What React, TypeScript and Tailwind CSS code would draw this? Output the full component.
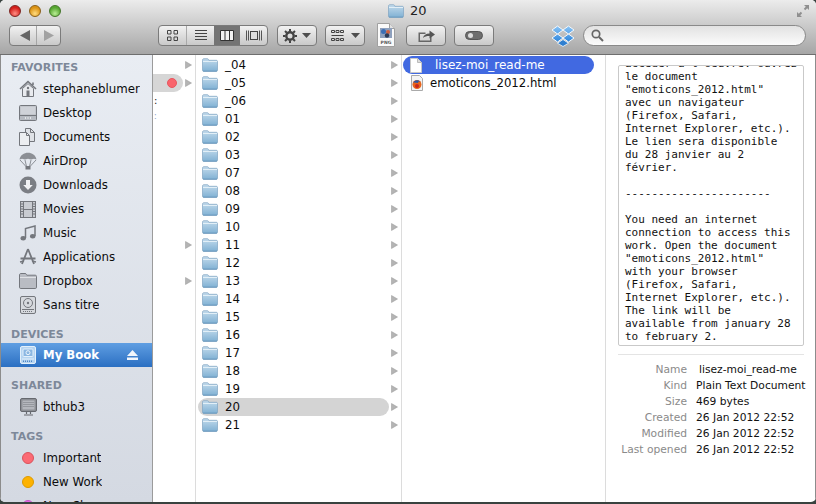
import React from "react";

const ui = { fontFamily: '"DejaVu Sans", Verdana, sans-serif' };

function Folder({ className = "" }: { className?: string }) {
  return (
    <svg width="16" height="14" viewBox="0 0 16 14" className={className}>
      <defs>
        <linearGradient id="fg" x1="0" y1="0" x2="0" y2="1">
          <stop offset="0" stopColor="#c3dbec" />
          <stop offset="1" stopColor="#7fb0d3" />
        </linearGradient>
      </defs>
      <path d="M.5 2.200C.5 1.200 1 .7 2 .7h3.300c.7 0 1 .3 1.300 1l.3.6h7.200c1 0 1.400.5 1.400 1.400v8.400c0 .9-.5 1.400-1.400 1.400H1.900c-.9 0-1.400-.5-1.400-1.400z" fill="url(#fg)" stroke="#7fa4c1" strokeWidth=".7" />
      <path d="M1 3.500h14" stroke="#e2eff7" strokeWidth="1" />
      <path d="M1 13h14" stroke="#6a9bbf" strokeWidth=".8" />
    </svg>
  );
}

function Arrow({ className = "" }: { className?: string }) {
  return (
    <svg width="7" height="8" viewBox="0 0 7 8" className={className}>
      <path d="M.5.5 6.500 4 .5 7.500z" fill="#b4b4b4" stroke="#979797" strokeWidth=".5" />
    </svg>
  );
}

const C = "#74777d";

const icons: Record<string, React.ReactNode> = {
  home: (
    <svg width="18" height="18" viewBox="0 0 18 18">
      <path d="M1 9 9 1.500 17 9M14 5V2.500" fill="none" stroke={C} strokeWidth="1.600" />
      <path d="M3.500 8.500 9 3.600l5.500 4.900V16.500h-11z" fill="#e9ebef" stroke={C} />
      <path d="M7.500 10.500h3V16.500h-3z" fill={C} />
      <circle cx="9" cy="8" r="1.200" fill={C} />
    </svg>
  ),
  desktop: (
    <svg width="18" height="16" viewBox="0 0 18 16">
      <rect x=".5" y=".5" width="17" height="15" rx="1" fill="#b6bac1" stroke={C} />
      <rect x="1.500" y="1.500" width="15" height="8" fill="#cfd2d8" />
      <path d="M1 10.500h16" stroke={C} />
      <path d="M6 13h1M8.500 13h1M11 13h1" stroke="#f2f3f5" strokeWidth="1.400" />
    </svg>
  ),
  docs: (
    <svg width="18" height="18" viewBox="0 0 18 18">
      <path d="M6.500.5h5l4 4V13.500h-9z" fill="#dfe2e7" stroke={C} />
      <path d="M.5 4.500h7l3 3v10h-10z" fill="#eceef1" stroke={C} />
      <path d="M7.500 4.500v3h3M11.500.5v4h4" fill="none" stroke={C} />
    </svg>
  ),
  airdrop: (
    <svg width="18" height="18" viewBox="0 0 18 18">
      <path d="M.5 7.500C1.500 3 5 .8 9 .8s7.500 2.200 8.500 6.700L15 6.700l-3 .9L9 6.700l-3 .9-3-.9z" fill="#8c8f95" />
      <path d="M1 8l6 6.500M17 8l-6 6.500M6 8l1.500 6.500M12 8l-1.500 6.500" stroke={C} strokeWidth=".8" />
      <rect x="6.500" y="14" width="5" height="3.500" fill={C} />
    </svg>
  ),
  downloads: (
    <svg width="18" height="18" viewBox="0 0 18 18">
      <circle cx="9" cy="9" r="8.500" fill="#7b7e84" />
      <path d="M7 4h4v5h2.800L9 14 4.200 9H7z" fill="#f1f2f4" />
    </svg>
  ),
  movies: (
    <svg width="16" height="17" viewBox="0 0 16 17">
      <rect x=".5" y=".5" width="15" height="16" fill="#c9ccd2" stroke={C} />
      <path d="M3.500 .5v16M12.500 .5v16M3.500 8.500h9" stroke={C} />
      <path d="M1 3h2M1 5.500h2M1 8h2M1 10.500h2M1 13h2M13 3h2M13 5.500h2M13 8h2M13 10.500h2M13 13h2" stroke={C} strokeWidth="1" />
    </svg>
  ),
  music: (
    <svg width="16" height="16" viewBox="0 0 16 16">
      <path d="M5.500 13V3.500L15 1v10" fill="none" stroke={C} strokeWidth="1.500" />
      <ellipse cx="3.200" cy="13.300" rx="2.700" ry="2.200" fill={C} />
      <ellipse cx="12.700" cy="11.300" rx="2.700" ry="2.200" fill={C} />
    </svg>
  ),
  apps: (
    <svg width="18" height="18" viewBox="0 0 18 18">
      <path d="M9 1 3 16M9 1l6 15M1.500 10.500h15" fill="none" stroke={C} strokeWidth="1.800" />
      <path d="M1 14l4-1M17 14l-4-1" stroke={C} strokeWidth="1.400" />
    </svg>
  ),
  folder: (
    <svg width="18" height="16" viewBox="0 0 18 16">
      <path d="M.5 2C.5 1 1 .5 2 .5h4c.8 0 1.200.3 1.500 1l.3.7h8.500c.8 0 1.200.5 1.200 1.300v10.700c0 .8-.4 1.300-1.200 1.300H1.700C.9 15.500.5 15 .5 14.200z" fill="#b9bcc3" stroke={C} />
      <path d="M1 4.500h16" stroke="#e0e2e6" />
    </svg>
  ),
  disk: (
    <svg width="16" height="18" viewBox="0 0 16 18">
      <rect x=".5" y=".5" width="15" height="17" rx="1.500" fill="#d6d9de" stroke={C} />
      <circle cx="8" cy="7" r="4.500" fill="none" stroke={C} />
      <circle cx="8" cy="7" r="1.200" fill={C} />
      <path d="M2 13.500h12" stroke={C} />
      <path d="M3 15.500h10" stroke={C} strokeDasharray="1 1" />
    </svg>
  ),
  book: (
    <svg width="16" height="18" viewBox="0 0 16 18">
      <rect x=".5" y=".5" width="15" height="17" rx="1.500" fill="#b5d4f1" stroke="#e3f0fb" />
      <rect x="3" y="3" width="10" height="7.500" rx="1" fill="#8bb7e2" stroke="#e3f0fb" />
      <circle cx="8" cy="6.700" r="2" fill="none" stroke="#eaf3fb" />
      <path d="M2 13h12" stroke="#e3f0fb" />
      <path d="M3 15.300h10" stroke="#4f86c4" strokeDasharray="1 1" strokeWidth="1.400" />
    </svg>
  ),
  monitor: (
    <svg width="17" height="18" viewBox="0 0 17 18">
      <rect x=".5" y=".5" width="16" height="13" rx="1.500" fill="#8c8f95" stroke="#66696f" />
      <rect x="2.500" y="2.500" width="12" height="9" fill="#b4b7bd" />
      <path d="M3 4.500h11M3 6.500h11M3 8.500h11" stroke="#94979d" />
      <path d="M6.500 14v2M10.500 14v2M4 17h9" stroke="#66696f" strokeWidth="1.200" />
    </svg>
  ),
};

function Dot({ color, border }: { color: string; border: string }) {
  return <span className="block w-[12px] h-[12px] rounded-full border" style={{ background: color, borderColor: border }} />;
}

function SidebarHead({ children, className = "" }: { children: string; className?: string }) {
  return <div className={`h-[14px] leading-[14px] pl-[10px] text-[11px] font-bold text-[#7d8899] ${className}`}>{children}</div>;
}

function IconSlot({ children }: { children: React.ReactNode }) {
  return (
    <span className="w-[42px] pl-[15px] flex shrink-0">
      <span className="w-[24px] flex justify-center">{children}</span>
    </span>
  );
}

function SidebarRow({ icon, label }: { icon: React.ReactNode; label: string }) {
  return (
    <div className="h-[24px] flex items-center text-[11.800px] text-[#0c0c0c] shrink-0">
      <IconSlot>{icon}</IconSlot>
      <span className="truncate pt-[1px]">{label}</span>
    </div>
  );
}

function Tool({ className = "", children }: { className?: string; children?: React.ReactNode }) {
  return (
    <div className={`h-[21px] rounded-[4px] border border-[#7b7b7b] bg-gradient-to-b from-[#f2f2f2] to-[#c9c9c9] flex items-center justify-center shrink-0 ${className}`}>
      {children}
    </div>
  );
}

const Caret = () => (
  <svg width="9" height="5" viewBox="0 0 9 5"><path d="M0 0h9L4.500 5z" fill="#4e4e4e" /></svg>
);

const GridSmall = () => (
  <svg width="13" height="11" viewBox="0 0 13 11" fill="none" stroke="#444">
    <path d="M.5.500h3v2h-3zM5 .5h3v2H5zM9.500 .5h3v2h-3z" />
    <path d="M.5 5.500h12" />
    <path d="M.5 8.500h3v2h-3zM5 8.500h3v2H5zM9.500 8.500h3v2h-3z" />
  </svg>
);

const cols = ["_04", "_05", "_06", "01", "02", "03", "07", "08", "09", "10", "11", "12", "13", "14", "15", "16", "17", "18", "19", "20", "21"];

const preview = [
  "accéder à l'oeuvre. ouvrez",
  "le document",
  "\"emoticons_2012.html\"",
  "avec un navigateur",
  "(Firefox, Safari,",
  "Internet Explorer, etc.).",
  "Le lien sera disponible",
  "du 28 janvier au 2",
  "février.",
  "\u00a0",
  "----------------------",
  "\u00a0",
  "You need an internet",
  "connection to access this",
  "work. Open the document",
  "\"emoticons_2012.html\"",
  "with your browser",
  "(Firefox, Safari,",
  "Internet Explorer, etc.).",
  "The link will be",
  "available from january 28",
  "to february 2.",
];

const meta: [string, string, string?][] = [
  ["Name", "lisez-moi_read-me", "pl-[3px]"],
  ["Kind", "Plain Text Document"],
  ["Size", "469 bytes"],
  ["Created", "26 Jan 2012 22:52"],
  ["Modified", "26 Jan 2012 22:52"],
  ["Last opened", "26 Jan 2012 22:52"],
];

export default function App() {
  return (
    <div className="w-[816px] h-[504px] bg-[#39423f] overflow-hidden" style={ui}>
      <div className="w-[816px] h-[502px] rounded-[5px] overflow-hidden flex flex-col bg-white">
        {/* Toolbar */}
        <div className="h-[55px] shrink-0 bg-gradient-to-b from-[#ececec] to-[#a6a6a6] border-b border-[#6e6e6e] flex flex-col">
          <div className="h-[23px] shrink-0 flex items-center relative">
            <div className="flex gap-[8px] pl-[9px] -mt-[1px]">
              <Dot color="radial-gradient(circle at 50% 75%, #ff8f85, #d41f1b 65%)" border="#7e2421" />
              <Dot color="radial-gradient(circle at 50% 75%, #ffdc80, #dc9314 65%)" border="#8a5f18" />
              <Dot color="radial-gradient(circle at 50% 75%, #b9ee95, #56a631 65%)" border="#427528" />
            </div>
            <div className="absolute left-[388px] top-[4px] flex items-center gap-[6px]">
              <Folder />
              <span className="text-[13px] leading-[14px] text-[#222]">20</span>
            </div>
            <svg width="14" height="14" viewBox="0 0 14 14" className="absolute left-[796px] top-[4px]">
              <path d="M8 1h5v5l-1.800-1.800-2 2-1.400-1.400 2-2zM6 13H1V8l1.800 1.800 2-2 1.400 1.400-2 2z" fill="#8f8f8f" />
            </svg>
          </div>
          <div className="h-[31px] flex items-start pl-[9px] pt-[2px]">
            <Tool className="w-[52px] mr-[97px] relative">
              <svg width="12" height="11" viewBox="0 0 12 11" className="absolute left-[10px] top-[4px]"><path d="M0 5.500 10 0v11z" fill="#666" /></svg>
              <span className="absolute left-[26px] top-0 h-full w-px bg-[#a5a5a5]" />
              <svg width="10" height="11" viewBox="0 0 10 11" className="absolute left-[34px] top-[4px]"><path d="M10 5.500 0 0v11z" fill="#a2a2a2" /></svg>
            </Tool>
            <Tool className="w-[110px] mr-[9px] overflow-hidden !justify-start">
              <div className="w-[28px] h-full flex items-center justify-center border-r border-[#a9a9a9]">
                <svg width="11" height="11" viewBox="0 0 11 11"><path d="M.5.500H4V4H.5zM7 .5h3.500V4H7zM.5 7H4v3.500H.5zM7 7h3.500v3.500H7z" fill="none" stroke="#444" /></svg>
              </div>
              <div className="w-[27px] h-full flex items-center justify-center">
                <svg width="12" height="11" viewBox="0 0 12 11"><path d="M0 .5h12M0 3.500h12M0 6.500h12M0 9.500h12" stroke="#444" /></svg>
              </div>
              <div className="w-[26px] h-full flex items-center justify-center bg-[#747474]">
                <svg width="14" height="11" viewBox="0 0 14 11"><path d="M.5.500h13v10H.5zM5 .5v10M9.500 .5v10" fill="#f2f2f2" stroke="#333" /></svg>
              </div>
              <div className="flex-1 h-full flex items-center justify-center">
                <svg width="16" height="11" viewBox="0 0 16 11"><path d="M.5.500v10M2.500 .5v10M13.500 .5v10M15.500 .5v10" stroke="#555" /><rect x="4.500" y="1.500" width="7" height="8" fill="#ddd" stroke="#444" /></svg>
              </div>
            </Tool>
            <Tool className="w-[40px] mr-[8px] gap-[5px]">
              <svg width="14" height="14" viewBox="0 0 14 14">
                <circle cx="7" cy="7" r="3.700" fill="none" stroke="#444" strokeWidth="2.400" />
                <path d="M7 0v2.500M7 11.500V14M0 7h2.500M11.500 7H14M2 2l1.800 1.800M10.200 10.200 12 12M12 2l-1.800 1.800M3.800 10.200 2 12" stroke="#444" strokeWidth="2" />
              </svg>
              <Caret />
            </Tool>
            <Tool className="w-[40px] mr-[11px] gap-[7px]"><GridSmall /><Caret /></Tool>
            <svg width="20" height="24" viewBox="0 0 20 24" className="shrink-0 -mt-[2px] mr-[10px]">
              <path d="M1.500 .5h12l5 5v18h-17z" fill="#fafafa" stroke="#a0a0a0" />
              <path d="M13.500 .5v5h5" fill="#e2e2e2" stroke="#a0a0a0" />
              <rect x="4" y="5" width="12" height="10" fill="#8ea0bd" />
              <circle cx="7.500" cy="8.500" r="2.500" fill="#3d6fb4" />
              <circle cx="12" cy="9" r="2" fill="#d0603f" />
              <circle cx="11" cy="12.500" r="2.200" fill="#2d3a55" />
              <text x="10" y="21" fontSize="4.500" fontWeight="700" textAnchor="middle" fill="#555">PNG</text>
            </svg>
            <Tool className="w-[40px] mr-[8px]">
              <svg width="17" height="13" viewBox="0 0 17 13">
                <path d="M.5 3.500h7V5H2v6.500h10V8h1.500v5H.5z" fill="#666" />
                <path d="M5 9c.5-3 3-4.500 6.500-4.500V1.500L17 5.500l-5.500 4V7C8.500 7 6.500 7.500 5 9z" fill="#555" />
              </svg>
            </Tool>
            <Tool className="w-[40px] mr-[57px]">
              <span className="w-[18px] h-[9px] rounded-full bg-[#6e6e6e] border border-[#555] flex items-center pl-[2px]">
                <span className="w-[5px] h-[5px] rounded-full bg-[#ddd]" />
              </span>
            </Tool>
            <svg width="24" height="22" viewBox="0 0 24 22" className="shrink-0 mr-[8px]">
              <defs>
                <linearGradient id="db" x1="0" y1="0" x2="0" y2="1">
                  <stop offset="0" stopColor="#8ac4f5" />
                  <stop offset="1" stopColor="#2f86dc" />
                </linearGradient>
              </defs>
              <path d="M6.500 1 12 5l-5.500 4L1 5zM17.500 1 23 5l-5.500 4L12 5zM6.500 9l5.500 4-5.500 4L1 13zM17.500 9l5.500 4-5.500 4-5.500-4z" fill="url(#db)" stroke="#f4f9fd" strokeWidth="1" strokeLinejoin="round" />
              <path d="M6.500 18.200 12 14.500l5.500 3.700L12 21.500z" fill="#2f7fd0" stroke="#f4f9fd" strokeWidth=".8" strokeLinejoin="round" />
            </svg>
            <div className="w-[223px] h-[21px] rounded-full border border-[#8a8a8a] bg-gradient-to-b from-[#e2e2e2] to-[#fbfbfb] flex items-center pl-[7px] shrink-0">
              <svg width="13" height="13" viewBox="0 0 13 13"><circle cx="5" cy="5" r="3.700" fill="none" stroke="#666" strokeWidth="1.700" /><path d="m8 8 4 4" stroke="#666" strokeWidth="2" /></svg>
            </div>
          </div>
        </div>

        {/* Body */}
        <div className="flex-1 flex min-h-0">
          {/* Sidebar */}
          <div className="w-[153px] shrink-0 bg-gradient-to-b from-[#e9edf3] to-[#d4d9e2] border-l border-[#8c8c8c] border-r border-r-[#9b9b9b] flex flex-col overflow-hidden pt-[6px]">
            <SidebarHead>FAVORITES</SidebarHead>
            <div className="h-[2px] shrink-0" />
            <SidebarRow icon={icons.home} label="stephaneblumer" />
            <SidebarRow icon={icons.desktop} label="Desktop" />
            <SidebarRow icon={icons.docs} label="Documents" />
            <SidebarRow icon={icons.airdrop} label="AirDrop" />
            <SidebarRow icon={icons.downloads} label="Downloads" />
            <SidebarRow icon={icons.movies} label="Movies" />
            <SidebarRow icon={icons.music} label="Music" />
            <SidebarRow icon={icons.apps} label="Applications" />
            <SidebarRow icon={icons.folder} label="Dropbox" />
            <SidebarRow icon={icons.disk} label="Sans titre" />
            <SidebarHead className="mt-[11px]">DEVICES</SidebarHead>
            <div className="h-[24px] mt-[1px] shrink-0 flex items-center bg-gradient-to-b from-[#5f9ee2] to-[#2a6fc2] text-white font-bold text-[11.700px] relative">
              <IconSlot>{icons.book}</IconSlot>
              <span className="pt-[1px]">My Book</span>
              <svg width="11" height="10" viewBox="0 0 11 10" className="absolute left-[126px] top-[7px]"><path d="M5.500 0 11 6H0zM0 7.500h11V10H0z" fill="#f1f6fc" /></svg>
            </div>
            <SidebarHead className="mt-[12px]">SHARED</SidebarHead>
            <div className="h-[2px] shrink-0" />
            <SidebarRow icon={icons.monitor} label="bthub3" />
            <SidebarHead className="mt-[11px]">TAGS</SidebarHead>
            <div className="h-[2px] shrink-0" />
            <SidebarRow icon={<span className="block w-[12px] h-[12px] rounded-full bg-[#fb6a74] border border-[#d9535c]" />} label="Important" />
            <SidebarRow icon={<span className="block w-[12px] h-[12px] rounded-full bg-[#fdb200] border border-[#dd9a00]" />} label="New Work" />
            <SidebarRow icon={<span className="block w-[12px] h-[12px] rounded-full bg-[#e96be8] border border-[#c655c6]" />} label="New Shop" />
          </div>

          {/* Column 1 */}
          <div className="w-[43px] shrink-0 border-r border-[#dcdcdc] pt-[1px] overflow-hidden">
            <div className="h-[18px] flex items-center justify-end pr-[3px]"><Arrow /></div>
            <div className="h-[18px] flex items-center justify-end pr-[3px]">
              <div className="h-[18px] w-[30px] mr-[2px] bg-[#d6d6d6] rounded-r-full flex items-center justify-end pr-[6px]">
                <span className="w-[10px] h-[10px] rounded-full bg-[#f9646c] border border-[#e8565e]" />
              </div>
              <Arrow />
            </div>
            <div className="h-[16px] text-[10px] leading-[18px] pl-[1px] text-[#222]">:</div>
            <div className="h-[18px] text-[8px] leading-[18px] pl-[1px] text-[#8aa0c8]">:</div>
            <div className="h-[110px]" />
            <div className="h-[18px] flex items-center justify-end pr-[3px]"><Arrow /></div>
            <div className="h-[18px]" />
            <div className="h-[18px] flex items-center justify-end pr-[3px]"><Arrow /></div>
          </div>

          {/* Column 2 */}
          <div className="w-[206px] shrink-0 border-r border-[#dcdcdc] pt-[1px]">
            {cols.map((c) => (
              <div key={c} className={`h-[18px] flex items-center text-[11.800px] text-[#0c0c0c] pl-[6px] pr-[3px] ${c === "20" ? "relative" : ""}`}>
                {c === "20" && <span className="absolute left-[2px] top-0 h-[18px] w-[191px] rounded-full bg-[#d4d4d4]" />}
                <Folder className="relative shrink-0" />
                <span className="relative ml-[7px] flex-1 pt-[1px]">{c}</span>
                <Arrow className="relative" />
              </div>
            ))}
          </div>

          {/* Column 3 */}
          <div className="w-[204px] shrink-0 border-r border-[#dcdcdc] pt-[1px]">
            <div className="h-[18px] w-[191px] ml-[1px] rounded-full bg-[#4169e1] flex items-center text-white text-[12px] pl-[7px]">
              <svg width="12" height="15" viewBox="0 0 12 15" className="shrink-0"><path d="M.5.500h7l4 4v10H.5z" fill="#fff" stroke="#c8c8c8" /><path d="M7.500 .5v4h4" fill="#ddd" stroke="#bbb" /></svg>
              <span className="ml-[13px]">lisez-moi_read-me</span>
            </div>
            <div className="h-[18px] ml-[8px] flex items-center text-[11.700px] text-[#0c0c0c]">
              <svg width="14" height="16" viewBox="0 0 14 16" className="shrink-0">
                <path d="M1.500.5h8l3 3v12h-11z" fill="#f4f4f4" stroke="#aaa" />
                <circle cx="7" cy="9.500" r="4.500" fill="#e8641b" />
                <path d="M3 8c1-3 5-4 8-1-2-1-3 0-3 1-2 0-4-1-5 0z" fill="#2a5aa8" />
                <circle cx="7" cy="11" r="2" fill="#c8281e" />
              </svg>
              <span className="ml-[6px] pt-[1px]">emoticons_2012.html</span>
            </div>
          </div>

          {/* Preview */}
          <div className="flex-1 min-w-0 px-[12px] border-r border-[#8c8c8c] flex flex-col">
            <div className="mt-[10px] w-[186px] h-[281px] border border-[#c9c9c9] rounded-[2px] overflow-hidden flex flex-col justify-end px-[6px] pb-[2px] shrink-0" style={{ fontFamily: '"DejaVu Sans Mono", monospace' }}>
              {preview.map((l, i) => (
                <div key={i} className="h-[13px] leading-[13px] text-[11px] text-[#111] whitespace-pre shrink-0">{l}</div>
              ))}
            </div>
            <div className="mt-[8px] h-px w-[186px] bg-[#e4e4e4] shrink-0" />
            <div className="mt-[7px] flex flex-col text-[10.700px] leading-[16px]">
              {meta.map(([k, v, p]) => (
                <div key={k} className="flex h-[16px] whitespace-nowrap">
                  <span className="w-[69px] text-right text-[#8a8a8a] shrink-0">{k}</span>
                  <span className={`ml-[9px] text-[#111] ${p ?? ""}`}>{v}</span>
                </div>
              ))}
            </div>
          </div>
        </div>
      </div>
    </div>
  );
}
